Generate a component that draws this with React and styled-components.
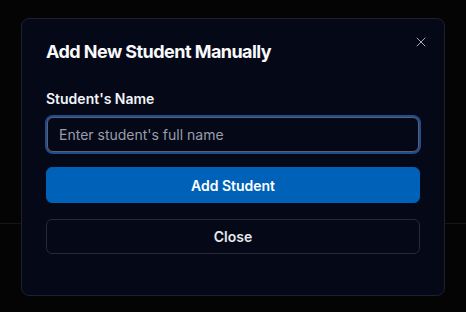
import styled, { createGlobalStyle } from "styled-components";
import { X } from "lucide-react";

const GlobalStyle = createGlobalStyle`
  html, body {
    margin: 0;
    padding: 0;
    height: 100%;
  }
  body {
    background: linear-gradient(
      to bottom,
      #040404 0px,
      #040404 223px,
      #15161b 223px,
      #15161b 224px,
      #040404 224px
    );
    font-family: Inter, "Noto Sans", "Liberation Sans", sans-serif;
  }
  #root {
    height: 100%;
  }
`;

const Backdrop = styled.div`
  box-sizing: border-box;
  height: 312px;
  padding-top: 18px;
  display: flex;
  align-items: flex-start;
  justify-content: center;
`;

const Dialog = styled.div`
  position: relative;
  box-sizing: border-box;
  width: 424px;
  height: 278px;
  background: #050817;
  border: 1px solid #1d2030;
  border-radius: 8px;
  padding: 19px 24px 24px;
  display: flex;
  flex-direction: column;
`;

const Title = styled.h2`
  margin: 0;
  color: #f8fafc;
  font-size: 18px;
  font-weight: 700;
  line-height: 28px;
  letter-spacing: -0.55px;
`;

const CloseIcon = styled.button`
  position: absolute;
  top: 15px;
  right: 15px;
  width: 16px;
  height: 16px;
  padding: 0;
  border: none;
  background: none;
  color: #a7abb8;
  display: flex;
  align-items: center;
  justify-content: center;
  cursor: pointer;
`;

const Field = styled.div`
  display: flex;
  flex-direction: column;
  gap: 8px;
  margin-top: 23px;
`;

const Label = styled.label`
  color: #f1f5f9;
  font-size: 14px;
  font-weight: 600;
  line-height: 20px;
`;

const Input = styled.input`
  box-sizing: border-box;
  height: 35px;
  margin: 0 1px;
  width: calc(100% - 2px);
  padding: 0 11px;
  background: #050817;
  border: 1px solid #5b6070;
  border-radius: 6px;
  box-shadow: 0 0 0 2px #234a8c;
  outline: none;
  color: #e5e7eb;
  caret-color: #e5e7eb;
  font-family: inherit;
  font-size: 14px;

  &::placeholder {
    color: #9a9eab;
  }
`;

const Button = styled.button`
  box-sizing: border-box;
  height: ${(p) => (p.$primary ? 36 : 35)}px;
  width: 100%;
  border-radius: 6px;
  font-family: inherit;
  font-size: 14px;
  font-weight: 600;
  cursor: pointer;
  margin-top: ${(p) => p.$gap}px;
  background: ${(p) => (p.$primary ? "#0061b8" : "transparent")};
  border: 1px solid ${(p) => (p.$primary ? "#0061b8" : "#262a38")};
  color: ${(p) => (p.$primary ? "#ffffff" : "#e6e8ee")};
`;

export default function App() {
  return (
    <>
      <GlobalStyle />
      <Backdrop>
        <Dialog>
          <CloseIcon aria-label="Close">
            <X size={16} strokeWidth={1.5} />
          </CloseIcon>
          <Title>Add New Student Manually</Title>
          <Field>
            <Label htmlFor="student-name">Student's Name</Label>
            <Input
              id="student-name"
              placeholder="Enter student's full name"
              autoFocus
            />
          </Field>
          <Button $primary $gap={15}>
            Add Student
          </Button>
          <Button $gap={16}>Close</Button>
        </Dialog>
      </Backdrop>
    </>
  );
}
